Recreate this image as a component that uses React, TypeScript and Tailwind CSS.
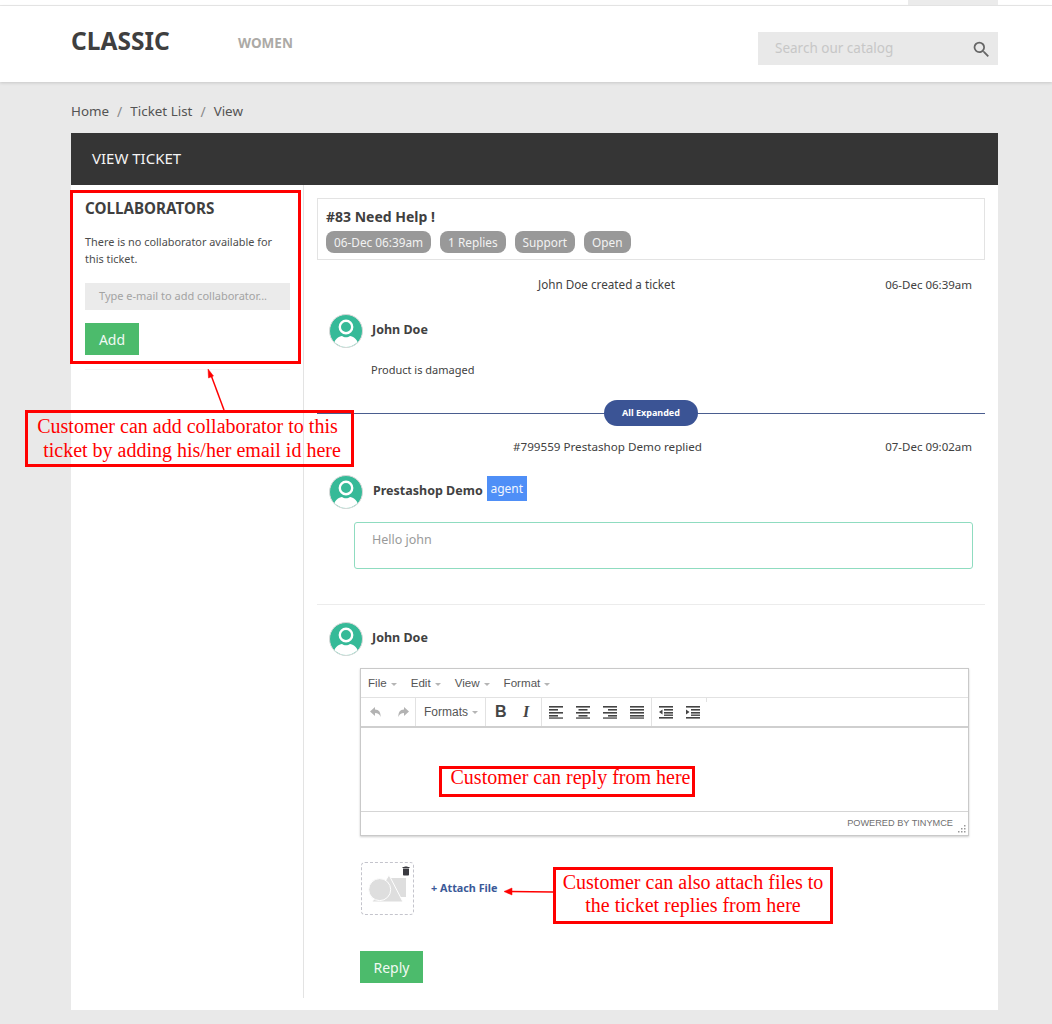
const serif = "font-['Liberation_Serif',serif] text-[20px] text-[#ff0000] text-center";

function Avatar() {
  return (
    <svg width="34" height="34" viewBox="0 0 34 34" className="shrink-0">
      <defs>
        <clipPath id="avatar-clip">
          <circle cx="17" cy="17" r="16" />
        </clipPath>
      </defs>
      <circle cx="17" cy="17" r="16.5" fill="#36ba98" stroke="#d8d8d8" />
      <g clipPath="url(#avatar-clip)">
        <circle cx="17" cy="13" r="6.2" fill="none" stroke="#fff" strokeWidth="2.4" />
        <path d="M4 34c0-8 6-12 9-12 2 1.800 6 1.800 8 0 3 0 9 4 9 12z" fill="#fff" />
      </g>
    </svg>
  );
}

function Pill({ children }: { children: string }) {
  return <span className="rounded-[8px] bg-[#999999] px-[8px] h-[22px] leading-[22px] text-[11.800px] text-[#f2f2f2]">{children}</span>;
}

function Caret() {
  return <span className="ml-[4px] inline-block size-0 border-x-[3px] border-t-[3px] border-x-transparent border-t-[#b5b5b5] align-middle" />;
}

function AlignIcon({ kind }: { kind: "left" | "center" | "right" | "full" }) {
  const short = kind === "full" ? 0 : 5;
  const x = kind === "left" ? 0 : kind === "center" ? 2.5 : kind === "right" ? 5 : 0;
  return (
    <svg width="14" height="14" viewBox="0 0 14 14" fill="#444">
      <rect x="0" y="1" width="14" height="1.600" />
      <rect x={x} y="4" width={14 - short} height="1.600" />
      <rect x="0" y="7" width="14" height="1.600" />
      <rect x={x} y="10" width={14 - short} height="1.600" />
      <rect x="0" y="12.400" width="14" height="1.300" />
    </svg>
  );
}

function IndentIcon({ flip }: { flip?: boolean }) {
  return (
    <svg width="14" height="14" viewBox="0 0 14 14" fill="#444">
      <rect x="0" y="1" width="14" height="1.600" />
      <rect x="5" y="4" width="9" height="1.600" />
      <rect x="5" y="7" width="9" height="1.600" />
      <rect x="0" y="12" width="14" height="1.600" />
      <rect x="5" y="9.500" width="9" height="1.400" />
      <path d={flip ? "M0 4.500l3.500 2.500L0 9.500z" : "M3.500 4.500L0 7l3.500 2.500z"} />
    </svg>
  );
}

function ArrowIcon({ flip }: { flip?: boolean }) {
  return (
    <svg width="14" height="14" viewBox="0 0 14 14" fill="#b3b3b3" className={flip ? "-scale-x-100" : ""}>
      <path d="M6 2L1 6.500 6 11V8c3 0 4.500 1 5.500 4 .5-4.500-1.500-7.500-5.500-7.500z" />
    </svg>
  );
}

function Divider() {
  return <span className="h-full w-px bg-[#e2e2e2]" />;
}

function Editor() {
  return (
    <div className="ml-[43px] mt-[12px] h-[168px] w-[609px] border border-[#c9c9c9] shadow-[0_1px_2px_rgba(0,0,0,0.2)] font-['Liberation_Sans',sans-serif] text-[#555]">
      <div className="flex h-[29px] items-center gap-[14px] pl-[7px] text-[11.600px] border-b border-[#e2e2e2]">
        <span>File<Caret /></span>
        <span>Edit<Caret /></span>
        <span>View<Caret /></span>
        <span>Format<Caret /></span>
      </div>
      <div className="flex h-[30px] items-center border-b-2 border-[#cfcfcf]">
        <div className="flex h-full w-[55px] items-center gap-[13px] pl-[8px] border-r border-[#e2e2e2]">
          <ArrowIcon />
          <ArrowIcon flip />
        </div>
        <div className="flex h-full w-[69px] items-center pl-[8px] text-[12px]">
          <span>Formats<Caret /></span>
        </div>
        <Divider />
        <div className="flex h-full w-[55px] items-center gap-[17px] pl-[9px] text-[16px] text-[#444]">
          <span className="w-[11px] font-bold">B</span>
          <span className="w-[11px] font-['Liberation_Serif',serif] font-bold italic">I</span>
        </div>
        <Divider />
        <div className="flex h-full items-center gap-[13px] px-[7px]">
          <AlignIcon kind="left" />
          <AlignIcon kind="center" />
          <AlignIcon kind="right" />
          <AlignIcon kind="full" />
        </div>
        <Divider />
        <div className="flex h-full items-center gap-[13px] pl-[7px] pr-[6px]">
          <IndentIcon />
          <IndentIcon flip />
        </div>
        <span className="h-[4px] self-start w-px bg-[#e2e2e2]" />
      </div>
      <div className="h-[84px] border-b border-[#d5d5d5]" />
      <div className="flex h-[23px] items-center justify-end pr-[15px] relative text-[9.200px] text-[#6f6f6f]">
        POWERED BY TINYMCE
        <svg width="8" height="8" viewBox="0 0 8 8" fill="#999" className="absolute right-[2px] bottom-[2px]">
          <rect x="6" y="0" width="1.500" height="1.500" />
          <rect x="3" y="3" width="1.500" height="1.500" />
          <rect x="6" y="3" width="1.500" height="1.500" />
          <rect x="0" y="6" width="1.500" height="1.500" />
          <rect x="3" y="6" width="1.500" height="1.500" />
          <rect x="6" y="6" width="1.500" height="1.500" />
        </svg>
      </div>
    </div>
  );
}

function Annotations() {
  return (
    <>
      <div className="absolute left-[70px] top-[190px] h-[174px] w-[231px] border-[3px] border-[#ff0000]" />
      <div className={`absolute left-[25px] top-[410px] flex h-[57px] w-[329px] flex-col items-center justify-center border-[3px] border-[#ff0000] pb-[1px] leading-[24px] ${serif}`}>
        <span className="pr-[4px]">Customer can add collaborator to this</span>
        <span>&nbsp;ticket by adding his/her email id here</span>
      </div>
      <div className={`absolute left-[439px] top-[766px] flex h-[31px] w-[256px] items-center justify-center border-[3px] border-[#ff0000] pb-[9px] pl-[7px] leading-[24px] ${serif}`}>
        Customer can reply from here
      </div>
      <div className={`absolute left-[553px] top-[867px] flex h-[57px] w-[280px] flex-col items-center justify-center border-[3px] border-[#ff0000] pb-[3px] leading-[23px] ${serif}`}>
        <span>Customer can also attach files to</span>
        <span>the ticket replies from here</span>
      </div>
      <svg className="absolute left-0 top-0" width="1052" height="1024" fill="#ff0000" stroke="#ff0000">
        <line x1="224" y1="410" x2="211" y2="375" strokeWidth="1.500" />
        <path d="M208 369l5.500 7-5 2z" strokeWidth="0.500" />
        <line x1="553" y1="892" x2="510" y2="891.500" strokeWidth="1.500" />
        <path d="M504 891.500l8-3.500v7z" strokeWidth="0.500" />
      </svg>
    </>
  );
}

export default function App() {
  return (
    <div className="relative h-[1024px] w-[1052px] overflow-hidden bg-[#e9e9e9] font-['Noto_Sans',sans-serif] text-[#414141]">
      <div className="flex h-[5px] justify-end bg-white pr-[54px]">
        <div className="w-[90px] bg-[#ebebeb]" />
      </div>
      <div className="h-px bg-[#e9e9e9]" />
      <header className="flex h-[76px] items-start bg-white pl-[71px] pr-[54px] shadow-[0_1px_3px_rgba(0,0,0,0.15)]">
        <div className="mt-[18px] w-[167px] text-[24.500px] font-bold leading-[34px] text-[#3f3f3f]">CLASSIC</div>
        <div className="mt-[27px] text-[13.500px] font-bold leading-[20px] text-[#acaaa6]">WOMEN</div>
        <div className="ml-auto mt-[26px] flex h-[33px] w-[240px] items-center justify-between bg-[#e9e9e9] pl-[17px] pr-[6px]">
          <span className="text-[13.500px] text-[#c7c7c7]">Search our catalog</span>
          <svg width="21" height="21" viewBox="0 0 24 24" fill="#666" className="mt-[2px]">
            <path d="M15.500 14h-.79l-.28-.27A6.471 6.471 0 0 0 16 9.500 6.500 6.500 0 1 0 9.500 16c1.610 0 3.090-.59 4.230-1.570l.27.28v.79l5 4.990L20.490 19l-4.990-5zm-6 0C7.010 14 5 11.990 5 9.500S7.010 5 9.500 5 14 7.010 14 9.500 11.990 14 9.500 14z" />
          </svg>
        </div>
      </header>

      <nav className="mt-[19px] flex h-[21px] items-center gap-[8px] pl-[71px] text-[13.400px] leading-[21px] text-[#545454]">
        <span>Home</span>
        <span className="text-[#8a8a8a] text-[14px]">/</span>
        <span>Ticket List</span>
        <span className="text-[#8a8a8a] text-[14px]">/</span>
        <span>View</span>
      </nav>

      <main className="ml-[71px] mt-[11px] h-[877px] w-[927px] bg-white">
        <div className="flex h-[52px] items-center bg-[#353535] pb-[2px] pl-[21px] text-[15px] text-[#f4f4f4]">VIEW TICKET</div>
        <div className="flex">
          <aside className="w-[233px] pl-[14px] pr-[9px] pt-[13px] h-[813px] border-r border-[#e3e3e3]">
            <h2 className="text-[15.200px] font-bold leading-[20px] text-[#3f3f3f]">COLLABORATORS</h2>
            <p className="mt-[15px] w-[200px] text-[10.900px] leading-[17px] text-[#4d4d4d]">There is no collaborator available for this ticket.</p>
            <div className="mt-[16px] flex h-[27px] w-[205px] items-center bg-[#ebebeb] pl-[14px] text-[11px] text-[#a3a3a3]">
              Type e-mail to add collaborator...
            </div>
            <div className="mt-[13px] flex h-[32px] w-[54px] items-center justify-center bg-[#4cbb6c] text-[14px] text-[#f1f9f3]">Add</div>
            <div className="mt-[14px] h-px w-[205px] bg-[#f5f5f5]" />
          </aside>

          <section className="w-[681px] pl-[13px] pt-[13px]">
            <div className="h-[62px] w-[668px] border border-[#e3e3e3] pl-[8px] pt-[8px]">
              <div className="text-[14px] font-bold leading-[20px] text-[#3f3f3f]">#83 Need Help !</div>
              <div className="mt-[4px] flex gap-[9px]">
                <Pill>06-Dec 06:39am</Pill>
                <Pill>1 Replies</Pill>
                <Pill>Support</Pill>
                <Pill>Open</Pill>
              </div>
            </div>

            <div className="relative mt-[13px] flex h-[24px] w-[655px] items-center justify-end text-[11.500px]">
              <span className="absolute left-[221px] text-[11.700px]">John Doe created a ticket</span>
              <span>06-Dec 06:39am</span>
            </div>

            <div className="ml-[12px] mt-[17px] flex h-[34px] items-center">
              <Avatar />
              <span className="ml-[9px] pb-[2px] text-[12.500px] font-bold">John Doe</span>
            </div>
            <p className="ml-[54px] mt-[13px] text-[11px] leading-[17px]">Product is damaged</p>

            <div className="relative mt-[22px] h-[26px] w-[668px]">
              <div className="mt-[13px] border-t border-[#4a5d8f] absolute inset-x-0 top-0" />
              <div className="absolute left-[287px] top-0 flex h-[26px] w-[94px] items-center justify-center rounded-full bg-[#3b5495] text-[9px] font-bold text-white">
                All Expanded
              </div>
            </div>

            <div className="relative mt-[9px] flex h-[24px] w-[655px] items-center justify-end text-[11.500px]">
              <span className="absolute left-[196px] text-[11.650px]">#799559 Prestashop Demo replied</span>
              <span>07-Dec 09:02am</span>
            </div>

            <div className="ml-[12px] mt-[16px] flex h-[34px] items-center">
              <Avatar />
              <span className="ml-[10px] pb-[2px] text-[12.500px] font-bold">Prestashop Demo</span>
              <span className="ml-[4px] mt-[1px] flex h-[25px] w-[40px] items-center justify-center self-start bg-[#4f8ff7] text-[12px] text-[#f2f6fe]">agent</span>
            </div>

            <div className="ml-[37px] mt-[13px] h-[47px] w-[619px] rounded-[3px] border border-[#8fdcc0] pl-[17px] pt-[8px] text-[12.500px] leading-[18px] text-[#9a9a9a]">
              Hello john
            </div>

            <div className="mt-[35px] h-px w-[668px] bg-[#ececec]" />

            <div className="ml-[12px] mt-[17px] flex h-[34px] items-center">
              <Avatar />
              <span className="ml-[9px] pb-[2px] text-[12.500px] font-bold">John Doe</span>
            </div>

            <Editor />

            <div className="ml-[44px] mt-[26px] flex items-center">
              <div className="relative size-[53px] rounded-[4px] border border-dashed border-[#c4c4cc]">
                <svg width="53" height="53" viewBox="0 0 53 53" fill="#dedede" className="absolute -left-px -top-px">
                  <rect x="28" y="16" width="17" height="19" />
                  <path d="M28 13l14 27H11z" stroke="#fff" strokeWidth="1" />
                  <circle cx="18.700" cy="27.600" r="11" stroke="#fff" strokeWidth="1" />
                </svg>
                <svg width="12" height="12" viewBox="0 0 24 24" fill="#3a3a40" className="absolute right-[1px] top-[2px]">
                  <path d="M6 19c0 1.100.9 2 2 2h8c1.100 0 2-.9 2-2V7H6v12zM19 4h-3.500l-1-1h-5l-1 1H5v2h14V4z" />
                </svg>
              </div>
              <span className="ml-[17px] text-[10.800px] font-bold text-[#3b5998]">+ Attach File</span>
            </div>

            <div className="ml-[43px] mt-[36px] flex h-[32px] w-[63px] items-center justify-center bg-[#4cbb6c] text-[14px] text-[#f1f9f3]">Reply</div>
          </section>
        </div>
      </main>

      <Annotations />
    </div>
  );
}
